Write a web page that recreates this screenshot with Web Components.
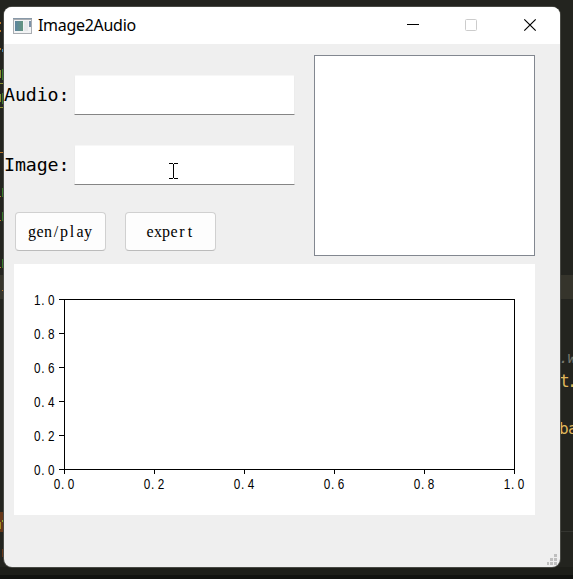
<!DOCTYPE html>
<html lang="en"><head><meta charset="utf-8"><title>Image2Audio</title>
<style>html,body{margin:0;height:100%;overflow:hidden;background:#23241f}</style></head><body>
<desktop-scene></desktop-scene>
<script>
const define=(name,html)=>customElements.define(name,class extends HTMLElement{
 connectedCallback(){ if(this.shadowRoot)return; const r=this.attachShadow({mode:'open'}); r.innerHTML=typeof html==='function'?html(this):html;}
});
define('code-backdrop',`<style>
:host{position:absolute;inset:0;background:#23241f;font:17px "DejaVu Sans Mono",monospace;overflow:hidden}
svg{display:block}</style>
<svg width="573" height="579" viewBox="0 0 573 579" shape-rendering="crispEdges">
<path fill="#35342b" d="M0 275h573v24H0z"/><path fill="#343530" d="M560 531h13v1h-13z"/>
<path fill="#1d1e19" d="M0 567h573v8H0z"/><path fill="#11120f" d="M0 575h573v4H0z"/>
<path fill="#b8782c" d="M0 22h1v2H0zM0 30h1v2H0zM0 48h1v2H0zM0 152h4v1H0zM3 142h1v1H3zM0 196h1v1H0zM0 220h1v1H0zM0 267h1v1H0zM2 290h2v1H2z"/>
<path fill="#3d7faa" d="M2 49h2v3H2z"/><path fill="#8b9132" d="M0 70h1v8H0zM0 94h1v8H0zM0 83h4v1H0zM0 107h4v1H0z"/>
<path fill="#357729" d="M2 69h2v11H2zM2 93h2v11H2zM2 188h2v9H2zM2 212h2v9H2zM2 259h2v9H2z"/>
<path fill="#663719" d="M0 512h4v20H0zM2 549h2v8H2z"/><path fill="#a68d20" d="M0 522h1v7H0z"/><path fill="#8daa2e" d="M2 520h2v2H2z"/>
<g shape-rendering="auto"><text x="559 567.5" y="363" fill="#77786f" font-style="italic" font-size="16">.w</text><text x="559.5 567" y="387" fill="#dfb65b">t.</text><text x="559 568" y="434" fill="#dfb65b" font-size="16">ba</text></g>
</svg>`);
define('title-bar',`<style>
:host{display:flex;align-items:center;height:37px;background:#fff;padding-left:9px;box-sizing:border-box;font:16px "Noto Sans",sans-serif;color:#000}
.t{margin-left:6px;flex:1;line-height:37px;letter-spacing:-.3px}svg{display:block}</style>
<svg width="19" height="16" shape-rendering="crispEdges"><defs><linearGradient id="g"><stop stop-color="#5d85a0"/><stop offset="1" stop-color="#63947f"/></linearGradient></defs><path fill="#a9adb2" d="M0 0h19v16H0z"/><path fill="#f2f3f4" d="M1 2h17v13H1z"/><path fill="#8899a8" d="M0 0h19v1H0z"/><path fill="url(#g)" d="M2 3h8v10H2z"/><path fill="#e6e8ea" d="M11 3h4v10h-4z"/><path fill="#7b91a6" d="M16 3h2v6h-2z"/></svg>
<span class="t"><slot></slot></span>
<svg width="156" height="37"><path stroke="#000" d="M3 17.5h12"/><rect x="61.5" y="12.5" width="11" height="11" rx="1" fill="none" stroke="#ccc"/><path d="M120.3 12.3l11.4 11.4m0-11.4l-11.4 11.4" stroke="#000" stroke-width="1.2"/></svg>`);
define('text-field',`<style>
:host{display:flex;align-items:center;height:40px;font:18.3px/40px "DejaVu Sans Mono",monospace;color:#000}
label{width:70px;white-space:pre;letter-spacing:-.12px}
.box{width:221px;height:40px;box-sizing:border-box;background:#fff;border:1px solid #ececec;border-top-color:#f7f7f7;border-bottom-color:#858585;border-radius:2px 2px 1px 1px}</style>
<label><slot></slot></label><div class="box"></div>`);
/* Centres every serif glyph in its own 8px cell, as a half-width bitmap font does. */
define('push-button',el=>{
 const w={g:.5,e:.444,n:.5,'/':.278,p:.5,l:.278,a:.444,y:.5,x:.5,r:.333,t:.278},t=el.getAttribute('label');
 const xs=[...t].map((c,i)=>(i*8-1+(8-w[c]*16)/2).toFixed(1)).join(' ');
 return `<style>
:host{display:flex;align-items:center;justify-content:center;box-sizing:border-box;width:91px;height:39px;background:#fdfdfd;border:1px solid #d0d0d0;border-bottom-color:#bbb;border-radius:4px}
svg{display:block;overflow:visible;font:16px "Liberation Serif",serif}</style><svg width="${t.length*8}" height="20"><text x="${xs}" y="15" fill="#000">${t}</text></svg>`;});
define('image-view',`<style>:host{display:block;box-sizing:border-box;width:221px;height:201px;background:#fff;border:1px solid #828790}</style>`);
define('plot-canvas',()=>{
 let s='';
 const label=(v,x,y)=>`<text transform="translate(${x} ${y}) scale(.84 1)" x="0 8.6 16.7">${v}</text>`;
 for(let i=0;i<6;i++){const v=(i/5).toFixed(1),x=50+90*i,y=205-34*i;
  s+=`<path stroke="#000" d="M${x+.5} 205v5M45 ${y+.5}h5"/>`+label(v,x-10.2,225)+label(v,20,y+6);}
 return `<style>:host{display:block;width:521px;height:251px;background:#fff}svg{display:block;font:14px "Liberation Sans",sans-serif}</style>
 <svg width="521" height="251"><rect x="50.5" y="35.5" width="450" height="170" fill="none" stroke="#000"/>${s}</svg>`;});
define('size-grip',`<style>:host{position:absolute;right:3px;bottom:2px}svg{display:block}</style><svg width="10" height="11" fill="#bfbfbf" shape-rendering="crispEdges"><path d="M7 0h3v3H7zM3 4h3v3H3zM7 4h3v3H7zM0 8h2v3H0zM3 8h3v3H3zM7 8h3v3H7z"/></svg>`);
define('app-window',`<style>
:host{position:absolute;left:4px;top:7px;width:556px;height:560px;background:#efefef;border-radius:8px;overflow:hidden;box-shadow:0 0 0 1px #484944}
main{padding-top:11px}.top{display:flex;justify-content:space-between;padding-right:25px}
.form{padding-top:20px;display:flex;flex-direction:column;gap:30px}.buttons{display:flex;gap:19px;margin:-3px 0 0 11px}
plot-canvas{margin:8px 0 0 10px}</style>
<title-bar>Image2Audio</title-bar><main><div class="top"><div class="form"><text-field>Audio:</text-field><text-field>Image:</text-field><div class="buttons"><push-button label="gen/play"></push-button><push-button label="expert"></push-button></div></div><image-view></image-view></div><plot-canvas></plot-canvas></main><size-grip></size-grip>`);
define('text-cursor',`<style>:host{position:absolute;left:169px;top:163px}svg{display:block}</style><svg width="9" height="16" shape-rendering="crispEdges"><path fill="#000" d="M0 0h4v1H0zM5 0h4v1H5zM4 1h1v14H4zM0 15h4v1H0zM5 15h4v1H5z"/></svg>`);
define('desktop-scene',`<style>:host{display:block;position:relative;width:573px;height:579px;overflow:hidden}</style><code-backdrop></code-backdrop><app-window></app-window><text-cursor></text-cursor>`);
</script></body></html>
